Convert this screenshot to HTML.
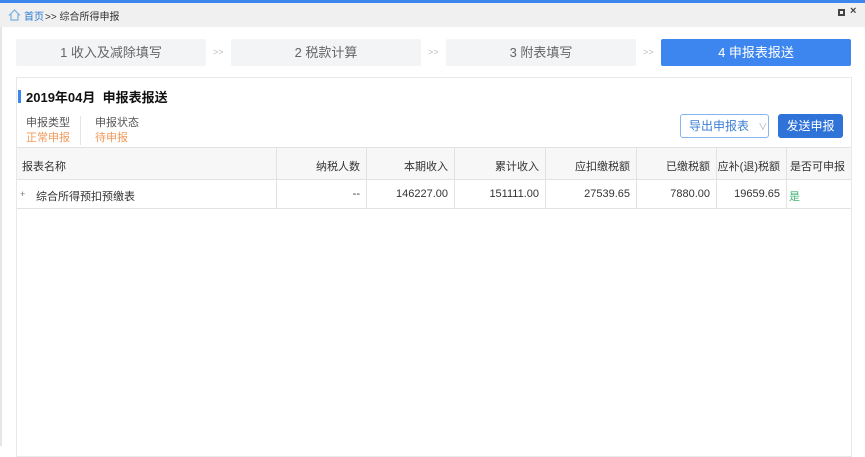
<!DOCTYPE html>
<html><head><meta charset="utf-8"><style>
*{margin:0;padding:0;box-sizing:border-box}
body{width:865px;height:446px;overflow:hidden;background:#fff;font-family:"Liberation Sans","Noto Sans CJK SC",sans-serif;position:relative;font-size:12px;color:#333}
.abs{position:absolute}
.top{left:0;top:0;width:865px;height:3px;background:#3d86ee}
.bar{left:0;top:3px;width:865px;height:24px;background:#f0f0f0}
.step{top:39px;height:27px;background:#f3f4f6;border-radius:2px;color:#666;font-size:13px;text-align:center;line-height:27px}
.sep{top:39px;line-height:27px;color:#bbb;font-size:9px}
.panel{left:16px;top:77px;width:836px;height:380px;border:1px solid #e8e8e8}
.th,.td{position:absolute;font-size:11px;text-align:right;padding-right:6px}
.vl{position:absolute;width:1px;background:#e2e2e2}
</style></head><body>
<div class="abs top"></div>
<div class="abs bar">
<svg class="abs" style="left:8px;top:6px" width="13" height="12" viewBox="0 0 13 12"><path d="M1 6.5 L6.5 1 L12 6.5 M3 5 V11 H10 V5" fill="none" stroke="#7ab0e0" stroke-width="1.2"/></svg>
<span class="abs" style="left:24px;top:5px;font-size:10px;color:#2a7bd0">首页</span>
<span class="abs" style="left:45px;top:5px;font-size:10px;color:#333">&gt;&gt; 综合所得申报</span>
<span class="abs" style="left:838px;top:6px;width:7px;height:7px;border:2px solid #444"></span>
<span class="abs" style="left:850px;top:2px;font-size:11px;color:#444;font-weight:bold">×</span>
</div>
<div class="abs" style="left:0;top:27px;width:2px;height:419px;background:#e6e6e6"></div>
<div class="abs step" style="left:16px;width:190px">1 收入及减除填写</div>
<div class="abs sep" style="left:213px">&gt;&gt;</div>
<div class="abs step" style="left:231px;width:190px">2 税款计算</div>
<div class="abs sep" style="left:428px">&gt;&gt;</div>
<div class="abs step" style="left:446px;width:190px">3 附表填写</div>
<div class="abs sep" style="left:643px">&gt;&gt;</div>
<div class="abs step" style="left:661px;width:190px;background:#3d86f0;color:#fff">4 申报表报送</div>
<div class="abs panel"></div>
<div class="abs" style="left:18px;top:90px;width:3px;height:13px;background:#3d86f0"></div>
<div class="abs" style="left:26px;top:87px;font-size:13px;font-weight:bold;color:#111">2019年04月&nbsp; 申报表报送</div>
<div class="abs" style="left:26px;top:114px;font-size:11px;color:#555">申报类型</div>
<div class="abs" style="left:26px;top:129px;font-size:11px;color:#f29a5a">正常申报</div>
<div class="abs" style="left:80px;top:116px;width:1px;height:29px;background:#e5e5e5"></div>
<div class="abs" style="left:95px;top:114px;font-size:11px;color:#555">申报状态</div>
<div class="abs" style="left:95px;top:129px;font-size:11px;color:#f29a5a">待申报</div>
<div class="abs" style="left:680px;top:114px;width:89px;height:24px;border:1px solid #8ab4f0;border-radius:3px;color:#3d7ed6;font-size:12px;line-height:22px;padding-left:8px">导出申报表 <span style="color:#9ab;font-size:9px;margin-left:6px">∨</span></div>
<div class="abs" style="left:778px;top:114px;width:65px;height:24px;background:#2f73d8;border-radius:3px;color:#fff;font-size:12px;line-height:24px;text-align:center">发送申报</div>
<div class="abs" style="left:17px;top:147px;width:834px;height:33px;background:#f7f7f7;border-top:1px solid #e2e2e2;border-bottom:1px solid #e2e2e2"></div>
<div class="abs" style="left:17px;top:208px;width:834px;height:1px;background:#e2e2e2"></div>
<div class="vl" style="left:276px;top:148px;height:61px"></div>
<div class="vl" style="left:366px;top:148px;height:61px"></div>
<div class="vl" style="left:454px;top:148px;height:61px"></div>
<div class="vl" style="left:545px;top:148px;height:61px"></div>
<div class="vl" style="left:636px;top:148px;height:61px"></div>
<div class="vl" style="left:716px;top:148px;height:61px"></div>
<div class="vl" style="left:786px;top:148px;height:61px"></div>
<div class="th" style="left:22px;top:158px;text-align:left">报表名称</div>
<div class="th" style="left:276px;width:90px;top:158px">纳税人数</div>
<div class="th" style="left:366px;width:88px;top:158px">本期收入</div>
<div class="th" style="left:454px;width:91px;top:158px">累计收入</div>
<div class="th" style="left:545px;width:91px;top:158px">应扣缴税额</div>
<div class="th" style="left:636px;width:80px;top:158px">已缴税额</div>
<div class="th" style="left:716px;width:70px;top:158px">应补(退)税额</div>
<div class="th" style="left:790px;top:158px;text-align:left">是否可申报</div>
<div class="td" style="left:20px;top:189px;text-align:left;font-size:9px;color:#777">+</div>
<div class="td" style="left:36px;top:188px;text-align:left">综合所得预扣预缴表</div>
<div class="td" style="left:276px;width:90px;top:188px">--</div>
<div class="td" style="left:366px;width:88px;top:188px">146227.00</div>
<div class="td" style="left:454px;width:91px;top:188px">151111.00</div>
<div class="td" style="left:545px;width:91px;top:188px">27539.65</div>
<div class="td" style="left:636px;width:80px;top:188px">7880.00</div>
<div class="td" style="left:716px;width:70px;top:188px">19659.65</div>
<div class="td" style="left:789px;top:188px;text-align:left;color:#3cb371">是</div>
</body></html>
